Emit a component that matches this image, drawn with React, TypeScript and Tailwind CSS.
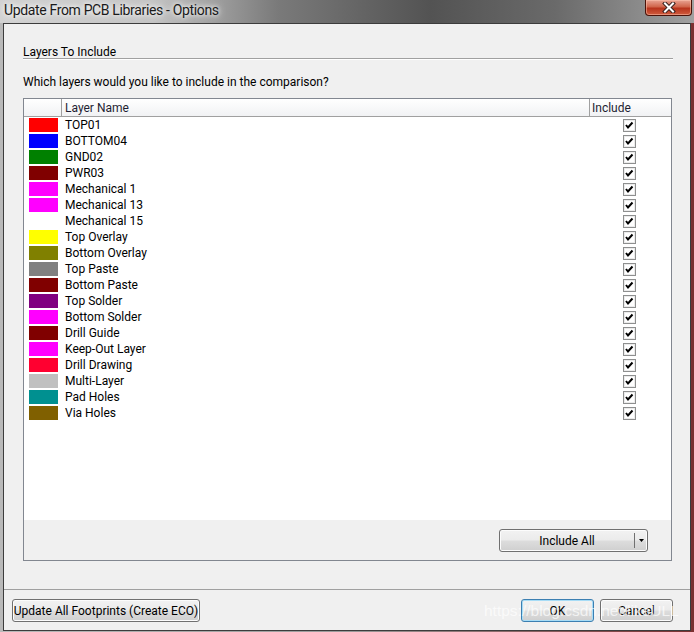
import React from 'react';

const layers = [
  { name: 'TOP01', color: '#ff0000' },
  { name: 'BOTTOM04', color: '#0000ff' },
  { name: 'GND02', color: '#008000' },
  { name: 'PWR03', color: '#800000' },
  { name: 'Mechanical 1', color: '#ff00ff' },
  { name: 'Mechanical 13', color: '#ff00ff' },
  { name: 'Mechanical 15', color: '#ffffff' },
  { name: 'Top Overlay', color: '#ffff00' },
  { name: 'Bottom Overlay', color: '#808000' },
  { name: 'Top Paste', color: '#808080' },
  { name: 'Bottom Paste', color: '#800000' },
  { name: 'Top Solder', color: '#800080' },
  { name: 'Bottom Solder', color: '#ff00ff' },
  { name: 'Drill Guide', color: '#800000' },
  { name: 'Keep-Out Layer', color: '#ff00ff' },
  { name: 'Drill Drawing', color: '#ff0030' },
  { name: 'Multi-Layer', color: '#c0c0c0' },
  { name: 'Pad Holes', color: '#009090' },
  { name: 'Via Holes', color: '#806000' },
];

const ui = { fontFamily: 'Roboto, "Noto Sans", sans-serif' };

function CheckBox() {
  return (
    <svg width="13" height="13" viewBox="0 0 13 13" className="block" shapeRendering="crispEdges">
      <rect x="0.5" y="0.5" width="12" height="12" fill="#fff" stroke="#8e8f8f" />
      <rect x="1.5" y="1.5" width="10" height="10" fill="none" stroke="#ececec" />
      <path d="M3 6 L5 8.5 L9.5 3.5" fill="none" stroke="#000" strokeWidth="2" shapeRendering="auto" />
    </svg>
  );
}

function WinButton({ label, width, focused }: { label: string; width: string; focused?: boolean }) {
  return (
    <button
      className={`${width} h-[23px] rounded-[3px] border text-[12px] leading-none whitespace-nowrap text-black bg-[linear-gradient(to_bottom,#f2f2f2_0%,#ebebeb_48%,#dddddd_52%,#cfcfcf_100%)] ${
        focused
          ? 'border-[#3c7fb1] shadow-[inset_0_0_0_1px_#a7dcf6]'
          : 'border-[#707070] shadow-[inset_0_0_0_1px_#fcfcfc]'
      }`}
      style={ui}
    >
      {label}
    </button>
  );
}

export default function App() {
  return (
    <div className="relative w-[694px] h-[632px] overflow-hidden flex flex-col bg-[linear-gradient(to_right,#b9b9b9_0%,#9a9a9a_50%,#7b3030_100%)]" style={ui}>
      {/* title bar */}
      <div className="h-[23px] flex items-start justify-between bg-[linear-gradient(to_right,#d2d2d2_0%,#c4c4c4_22%,#7a7a7a_40%,#535353_62%,#6a6a6a_80%,#a0a0a0_100%)]">
        <span className="pl-[4px] pt-[1px] text-[14px] tracking-[-0.35px] leading-[19px] text-[#1a1a1a] [text-shadow:0_0_8px_#ffffff,0_0_4px_#ffffff]">
          Update From PCB Libraries - Options
        </span>
        <div className="mr-[2px] w-[47px] h-[16px] rounded-b-[4px] border border-t-0 border-[#4a1208] flex items-center justify-center bg-[linear-gradient(to_bottom,#e9a493_0%,#d0654b_45%,#b8341c_55%,#cf5c3e_100%)] shadow-[inset_0_0_0_1px_rgba(255,200,180,0.5)]">
          <svg width="14" height="11" viewBox="0 0 14 11">
            <path d="M3 1.5 L11 9.5 M11 1.5 L3 9.5" stroke="#3a2420" strokeWidth="4" strokeLinecap="square" />
            <path d="M3 1.5 L11 9.5 M11 1.5 L3 9.5" stroke="#ffffff" strokeWidth="2" strokeLinecap="square" />
          </svg>
        </div>
      </div>

      {/* frame + client */}
      <div className="px-[3px] pb-[1px] flex-1 flex">
        <div className="flex-1 flex flex-col border border-[#3c3c3c] bg-[#f0f0f0] text-[12px] text-black">
          <div className="pt-[20px] pl-[19px] pr-[17px]">
            <div className="leading-[14px] pt-[1px] h-[15px] border-b border-[#a0a0a0] shadow-[0_1px_0_#ffffff]">Layers To Include</div>
            <div className="mt-[15px] pt-[1px] leading-[14px]">Which layers would you like to include in the comparison?</div>

            {/* table */}
            <div className="mt-[9px] w-[649px] h-[463px] border border-[#828790] flex flex-col">
              <div className="h-[421px] bg-white flex flex-col">
                <div className="h-[18px] flex border-b border-[#a0a0a0] bg-[linear-gradient(to_bottom,#ffffff_0%,#f1f2f4_100%)] text-[#1e1e32]">
                  <div className="w-[38px] border-r border-[#a0a0a0]" />
                  <div className="w-[528px] border-r border-[#a0a0a0] pl-[3px] leading-[18px]">Layer Name</div>
                  <div className="w-[81px] pl-[2px] leading-[18px]">Include</div>
                </div>
                {layers.map((l) => (
                  <div key={l.name} className="h-[16px] flex items-center">
                    <div className="w-[38px] pl-[5px]">
                      <div className="w-[29px] h-[14px]" style={{ backgroundColor: l.color }} />
                    </div>
                    <div className="w-[528px] pl-[3px] leading-[16px]">{l.name}</div>
                    <div className="w-[81px] pl-[33px]">
                      <CheckBox />
                    </div>
                  </div>
                ))}
              </div>
              <div className="flex-1 flex justify-end items-start pt-[9px] pr-[23px]">
                <div className="w-[149px] h-[23px] flex rounded-[3px] border border-[#707070] shadow-[inset_0_0_0_1px_#fcfcfc] bg-[linear-gradient(to_bottom,#f2f2f2_0%,#ebebeb_48%,#dddddd_52%,#cfcfcf_100%)]">
                  <div className="w-[134px] flex items-center justify-center leading-none">Include All</div>
                  <div className="w-[1px] my-[3px] bg-[#707070]" />
                  <div className="flex-1 flex items-center justify-center">
                    <svg width="5" height="3" viewBox="0 0 5 3">
                      <path d="M0 0 H5 L2.5 3 Z" fill="#000" />
                    </svg>
                  </div>
                </div>
              </div>
            </div>
          </div>

          <div className="mt-[28px] h-[1px] bg-[#a0a0a0]" />
          <div className="pt-[9px] pb-[8px] pl-[8px] pr-[17px] flex items-start">
            <WinButton label="Update All Footprints (Create ECO)" width="w-[188px]" />
            <div className="flex-1" />
            <WinButton label="OK" width="w-[73px]" focused />
            <div className="w-[6px]" />
            <WinButton label="Cancel" width="w-[73px]" />
          </div>
        </div>
      </div>

      {/* watermark */}
      <div
        className="absolute left-[484px] top-[601px] text-[15.5px] leading-[20px] text-white/70 pointer-events-none whitespace-nowrap"
        style={{ fontFamily: '"Liberation Sans", Arial, sans-serif' }}
      >
        https://blog.csdn.net/likeULL
      </div>
    </div>
  );
}
